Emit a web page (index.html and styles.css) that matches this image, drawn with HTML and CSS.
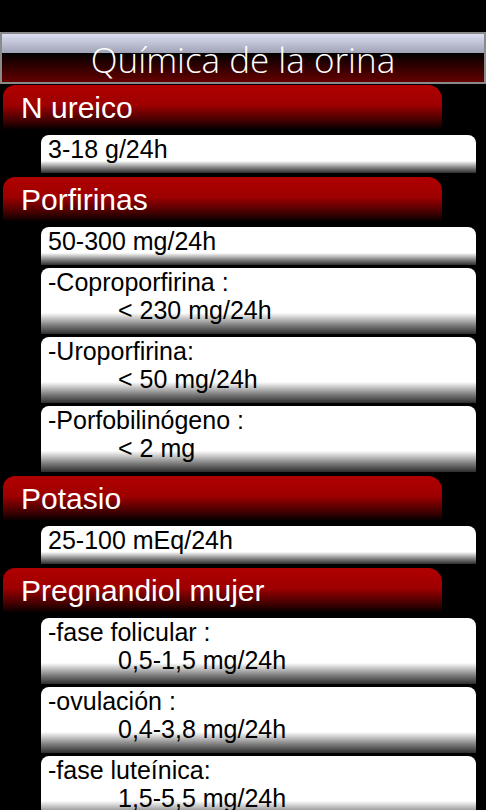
FILE: index.html
```html
<!DOCTYPE html>
<html lang="es">
<head>
  <meta charset="UTF-8" />
  <meta name="viewport" content="width=device-width, initial-scale=1.0"/>
  <title>Química de la orina</title>
  <link rel="stylesheet" href="styles.css">
</head>
<body>
  <div class="title">Química de la orina</div>

  <!-- N ureico -->
  <section class="group">
    <h2 class="group-head">N ureico</h2>
    <ul class="items">
      <li class="item"><p>3-18 g/24h</p></li>
    </ul>
  </section>

  <!-- Porfirinas -->
  <section class="group">
    <h2 class="group-head">Porfirinas</h2>
    <ul class="items">
      <li class="item"><p>50-300 mg/24h</p></li>
      <li class="item">
        <p>-Coproporfirina :</p>
        <p class="val">&lt; 230 mg/24h</p>
      </li>
      <li class="item">
        <p>-Uroporfirina:</p>
        <p class="val">&lt; 50 mg/24h</p>
      </li>
      <li class="item">
        <p>-Porfobilinógeno :</p>
        <p class="val">&lt; 2 mg</p>
      </li>
    </ul>
  </section>

  <!-- Potasio -->
  <section class="group">
    <h2 class="group-head">Potasio</h2>
    <ul class="items">
      <li class="item"><p>25-100 mEq/24h</p></li>
    </ul>
  </section>

  <!-- Pregnandiol mujer -->
  <section class="group">
    <h2 class="group-head">Pregnandiol mujer</h2>
    <ul class="items">
      <li class="item">
        <p>-fase folicular :</p>
        <p class="val">0,5-1,5 mg/24h</p>
      </li>
      <li class="item">
        <p>-ovulación :</p>
        <p class="val">0,4-3,8 mg/24h</p>
      </li>
      <li class="item">
        <p>-fase luteínica:</p>
        <p class="val">1,5-5,5 mg/24h</p>
      </li>
    </ul>
  </section>
</body>
</html>
```

FILE: styles.css
```css
body {
  margin: 0;
  padding-top: 32px;
  background-color: #000;
  font-family: "Liberation Sans", Arial, sans-serif;
}

.title {
  height: 48px;
  border: 2px solid #8a8a8a;
  background: linear-gradient(to bottom, #dcdff2 0%, #9ea2b4 40%, #000 40%, #1c0000 55%, #640000 100%);
  color: white;
  font-family: "Open Sans", sans-serif;
  font-weight: 300;
  font-size: 35px;
  line-height: 51px;
  text-align: center;
  overflow: hidden;
}

.group {
  margin-top: 1px;
  margin-bottom: 4px;
}

.group-head {
  margin: 0 44px 5px 3px;
  height: 45px;
  padding-left: 18px;
  border-radius: 12px 14px 0 0;
  background: linear-gradient(to bottom, #b00000 0%, #9e0000 45%, #3a0000 82%, #000 100%);
  color: white;
  font-size: 30px;
  font-weight: normal;
  line-height: 45px;
}

.items {
  list-style: none;
  margin: 0 10px 0 41px;
  padding: 0;
  display: flex;
  flex-direction: column;
  gap: 3px;
}

.item {
  padding: 0 7px 10px;
  border-radius: 8px 8px 0 0;
  background: linear-gradient(to bottom, #fff 0%, #fff 68%, #dcdcdc 73%, #7c7c7c 87%, #2e2e2e 100%);
  color: #000;
}

.item p {
  margin: 0;
  font-size: 25px;
  line-height: 28px;
}

.item .val {
  padding-left: 70px;
}
```
